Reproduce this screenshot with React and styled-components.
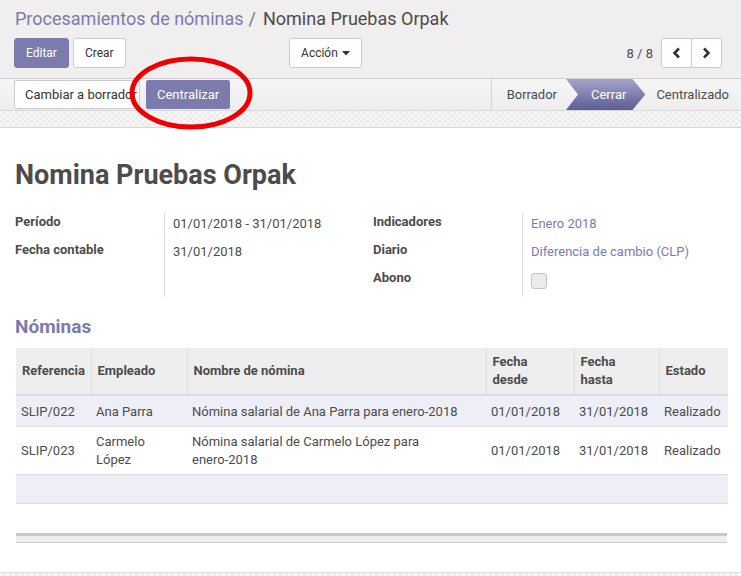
import React from 'react';
import styled, { createGlobalStyle } from 'styled-components';

const GlobalStyle = createGlobalStyle`
    html, body {
        margin: 0;
        padding: 0;
        background: #f0eeee;
    }
    body {
        font-family: Roboto, "Noto Sans", "Liberation Sans", sans-serif;
        font-size: 13px;
        color: #4c4c4c;
    }
`;

const pattern = `
    background-color: #f4f4f4;
    background-image: conic-gradient(#ececec 25%, #f7f7f7 0 50%, #ececec 0 75%, #f7f7f7 0);
    background-size: 6px 6px;
`;

const Page = styled.div`
    position: relative;
    width: 741px;
    height: 576px;
    overflow: hidden;
    display: flex;
    flex-direction: column;
`;

const ControlPanel = styled.div`
    background: #f0eeee;
    padding: 6px 19px 10px 14px;
    border-bottom: 1px solid #cfcfcf;
`;

const Breadcrumb = styled.div`
    font-size: 18px;
    line-height: 26px;
    padding-left: 1px;
    margin-bottom: 6px;
    color: #4c4c4c;
`;

const Crumb = styled.span`
    color: #7c7bad;
`;

const Sep = styled.span`
    color: #777;
    margin: 0 7px 0 5px;
`;

const ButtonRow = styled.div`
    display: flex;
    align-items: center;
`;

const Btn = styled.button`
    font-family: inherit;
    font-size: 12px;
    height: 30px;
    padding: 0 11px;
    border-radius: 3px;
    border: 1px solid ${p => (p.$primary ? '#7c7bad' : '#ccc')};
    background: ${p => (p.$primary ? '#7c7bad' : '#fff')};
    color: ${p => (p.$primary ? '#fff' : '#333')};
    margin-right: ${p => p.$mr || 0}px;
    display: inline-flex;
    align-items: center;
    gap: 4px;
    cursor: pointer;
`;

const Spacer = styled.div`
    flex: ${p => p.$grow || 1};
`;

const PagerValue = styled.span`
    font-size: 13px;
    margin-right: 8px;
`;

const PagerGroup = styled.div`
    display: flex;
    border: 1px solid #ccc;
    border-radius: 3px;
    background: #fff;
    height: 28px;
`;

const PagerBtn = styled.div`
    width: 29px;
    display: flex;
    align-items: center;
    justify-content: center;
    & + & {
        border-left: 1px solid #ccc;
    }
`;

const StatusBar = styled.div`
    display: flex;
    align-items: stretch;
    height: 31px;
    background: linear-gradient(#f6f6f6, #ededed);
    border-bottom: 1px solid #d8d8d8;
    padding-left: 14px;
`;

const StatusButtons = styled.div`
    display: flex;
    align-items: center;
    gap: 6px;
    flex: 1;
`;

const ActionBtn = styled.button`
    font-family: inherit;
    font-size: 13px;
    height: 29px;
    padding: 0 10px;
    border-radius: 2px;
    border: 1px solid ${p => (p.$primary ? '#7c7bad' : '#ccc')};
    background: ${p => (p.$primary ? '#7c7bad' : '#fff')};
    color: ${p => (p.$primary ? '#fff' : '#333')};
    white-space: nowrap;
    overflow: hidden;
    text-align: left;
    max-width: ${p => p.$max || 'none'};
`;

const Steps = styled.div`
    display: flex;
    align-items: stretch;
    border-left: 1px solid #d4d4d4;
`;

const Step = styled.div`
    display: flex;
    align-items: center;
    font-size: 13px;
    padding: ${p => (p.$active ? '0 19px 0 25px' : p.$last ? '0 12px 0 11px' : '0 9px 0 15px')};
    color: ${p => (p.$active ? '#fff' : '#4c4c4c')};
    background: ${p => (p.$active ? 'linear-gradient(#a4a3c9, #5e5d96)' : 'transparent')};
    clip-path: ${p =>
        p.$active
            ? 'polygon(0 0, calc(100% - 13px) 0, 100% 50%, calc(100% - 13px) 100%, 0 100%, 12px 50%)'
            : 'none'};
`;

const SheetBg = styled.div`
    flex: 1;
    ${pattern}
    padding-top: 16px;
    display: flex;
    flex-direction: column;
`;

const Sheet = styled.div`
    background: #fff;
    border-top: 1px solid #d6d5e6;
    border-bottom: 1px solid #ddd;
    height: 444px;
    padding: 0 14px 0 15px;
`;

const Title = styled.h1`
    margin: 32px 0 22px;
    font-size: 27px;
    line-height: 30px;
    font-weight: 700;
    color: #4c4c4c;
`;

const Groups = styled.div`
    display: flex;
`;

const Group = styled.div`
    display: grid;
    grid-template-columns: 149px 1fr;
    width: ${p => p.$w}px;
`;

const Label = styled.div`
    font-weight: 700;
    line-height: 18px;
    padding: 1px 0 9px;
`;

const ValueCol = styled.div`
    border-left: 1px solid #ddd;
    padding: 3px 0 0 8px;
    min-height: 82px;
`;

const Value = styled.div`
    line-height: 18px;
    height: 28px;
    color: ${p => (p.$link ? '#7c7bad' : '#4c4c4c')};
`;

const Check = styled.div`
    width: 14px;
    height: 14px;
    border: 1px solid #c4c4c4;
    border-radius: 3px;
    background: #ebebeb;
    margin-top: 2px;
`;

const SectionTitle = styled.h2`
    margin: 18px 0 9px;
    font-size: 19px;
    line-height: 24px;
    font-weight: 700;
    color: #7c7bad;
`;

const Table = styled.table`
    width: 712px;
    margin-left: 1px;
    border-collapse: collapse;
    table-layout: fixed;
    font-size: 13px;
`;

const Th = styled.th`
    box-sizing: border-box;
    background: #eee;
    text-align: left;
    font-weight: 700;
    line-height: 18px;
    padding: 5px 6px;
    height: 47px;
    border-left: 1px solid #dedede;
    border-bottom: 2px solid #ddd;
    width: ${p => p.$w}px;
    &:first-child {
        border-left: none;
    }
`;

const Tr = styled.tr`
    background: ${p => (p.$odd ? '#eeeef6' : '#fff')};
    border-bottom: 1px solid #ddd;
`;

const Td = styled.td`
    line-height: 18px;
    padding: 6px 5px 5px 5px;
    height: ${p => p.$h || 19}px;
    vertical-align: middle;
`;

const TableFooter = styled.div`
    width: 711px;
    margin-left: 1px;
    margin-top: 29px;
    height: 6px;
    background: #eee;
    border-top: 3px solid #c8c8c8;
    border-bottom: 1px solid #ccc;
`;

const Highlight = styled.svg`
    position: absolute;
    left: 128px;
    top: 55px;
    pointer-events: none;
`;

const Caret = () => (
    <svg width="8" height="5" viewBox="0 0 8 5">
        <path d="M0 0h8L4 4.5z" fill="#333" />
    </svg>
);

const Chevron = ({ dir }) => (
    <svg width="9" height="12" viewBox="0 0 9 12">
        <path
            d={dir === 'left' ? 'M7 1.5L2.5 6 7 10.5' : 'M2 1.5L6.5 6 2 10.5'}
            fill="none"
            stroke="#333"
            strokeWidth="2.6"
        />
    </svg>
);

const rows = [
    {
        ref: 'SLIP/022',
        emp: 'Ana Parra',
        name: 'Nómina salarial de Ana Parra para enero-2018',
        from: '01/01/2018',
        to: '31/01/2018',
        state: 'Realizado',
    },
    {
        ref: 'SLIP/023',
        emp: <>Carmelo<br />López</>,
        name: <>Nómina salarial de Carmelo López para<br />enero-2018</>,
        from: '01/01/2018',
        to: '31/01/2018',
        state: 'Realizado',
        h: 35,
    },
];

export default function App() {
    return (
        <Page>
            <GlobalStyle />
            <ControlPanel>
                <Breadcrumb>
                    <Crumb>Procesamientos de nóminas</Crumb>
                    <Sep>/</Sep>
                    Nomina Pruebas Orpak
                </Breadcrumb>
                <ButtonRow>
                    <Btn $primary $mr={4}>Editar</Btn>
                    <Btn>Crear</Btn>
                    <Spacer $grow={1} />
                    <Btn>Acción <Caret /></Btn>
                    <Spacer $grow={1.62} />
                    <PagerValue>8 / 8</PagerValue>
                    <PagerGroup>
                        <PagerBtn><Chevron dir="left" /></PagerBtn>
                        <PagerBtn><Chevron dir="right" /></PagerBtn>
                    </PagerGroup>
                </ButtonRow>
            </ControlPanel>
            <StatusBar>
                <StatusButtons>
                    <ActionBtn $max="126px">Cambiar a borrador</ActionBtn>
                    <ActionBtn $primary>Centralizar</ActionBtn>
                </StatusButtons>
                <Steps>
                    <Step>Borrador</Step>
                    <Step $active>Cerrar</Step>
                    <Step $last>Centralizado</Step>
                </Steps>
            </StatusBar>
            <SheetBg>
                <Sheet>
                    <Title>Nomina Pruebas Orpak</Title>
                    <Groups>
                        <Group $w={358}>
                            <div>
                                <Label>Período</Label>
                                <Label>Fecha contable</Label>
                            </div>
                            <ValueCol>
                                <Value>01/01/2018 - 31/01/2018</Value>
                                <Value>31/01/2018</Value>
                            </ValueCol>
                        </Group>
                        <Group $w={354}>
                            <div>
                                <Label>Indicadores</Label>
                                <Label>Diario</Label>
                                <Label>Abono</Label>
                            </div>
                            <ValueCol>
                                <Value $link>Enero 2018</Value>
                                <Value $link>Diferencia de cambio (CLP)</Value>
                                <Check />
                            </ValueCol>
                        </Group>
                    </Groups>
                    <SectionTitle>Nóminas</SectionTitle>
                    <Table>
                        <thead>
                            <tr>
                                <Th $w={75}>Referencia</Th>
                                <Th $w={96}>Empleado</Th>
                                <Th $w={299}>Nombre de nómina</Th>
                                <Th $w={88}>Fecha<br />desde</Th>
                                <Th $w={85}>Fecha<br />hasta</Th>
                                <Th $w={69}>Estado</Th>
                            </tr>
                        </thead>
                        <tbody>
                            {rows.map((r, i) => (
                                <Tr key={r.ref} $odd={i % 2 === 0}>
                                    <Td $h={r.h}>{r.ref}</Td>
                                    <Td $h={r.h}>{r.emp}</Td>
                                    <Td $h={r.h}>{r.name}</Td>
                                    <Td $h={r.h}>{r.from}</Td>
                                    <Td $h={r.h}>{r.to}</Td>
                                    <Td $h={r.h}>{r.state}</Td>
                                </Tr>
                            ))}
                            <Tr $odd>
                                <Td colSpan={6} $h={17}></Td>
                            </Tr>
                        </tbody>
                    </Table>
                    <TableFooter />
                </Sheet>
            </SheetBg>
            <Highlight width="126" height="76" viewBox="0 0 126 76">
                <ellipse cx="63" cy="38" rx="59" ry="34" fill="none" stroke="#ee0000" strokeWidth="5" />
            </Highlight>
        </Page>
    );
}
